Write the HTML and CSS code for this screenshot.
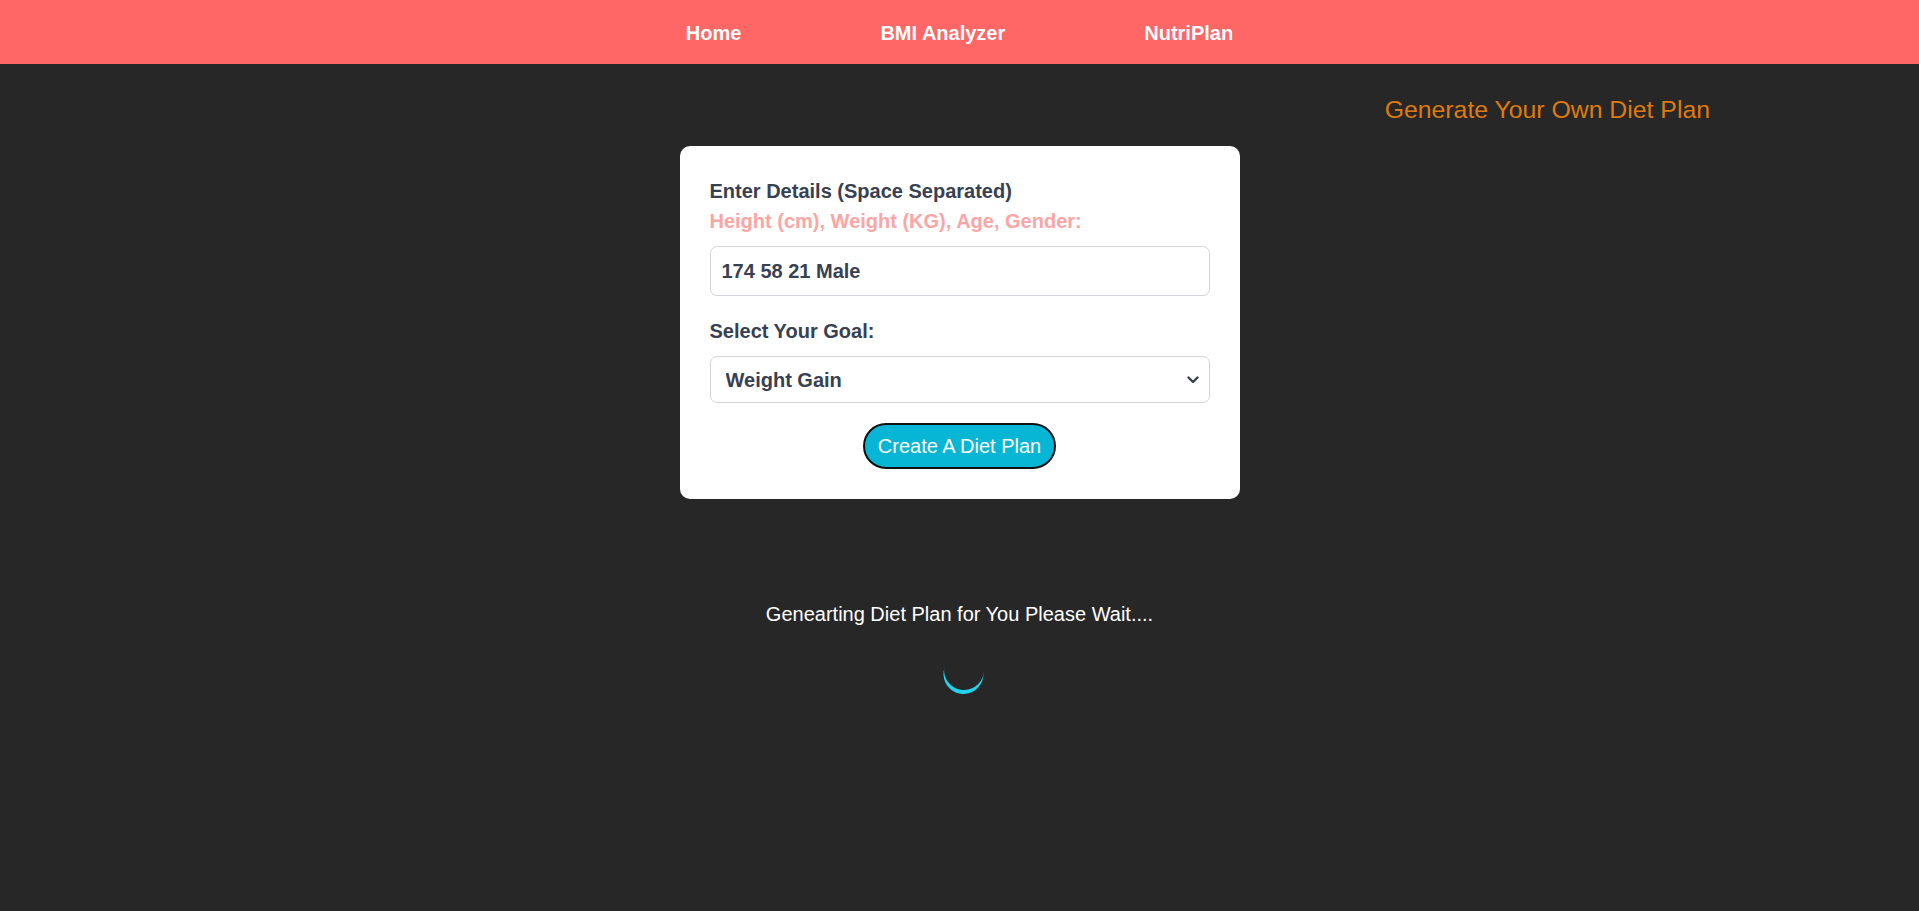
FILE: index.html
```html
<!DOCTYPE html>
<html lang="en">
<head>
<meta charset="utf-8">
<title>NutriPlan</title>
<link rel="stylesheet" href="styles.css">
</head>
<body>
<nav class="navbar">
  <a class="nav-link" href="#">Home</a>
  <a class="nav-link" href="#">BMI Analyzer</a>
  <a class="nav-link" href="#">NutriPlan</a>
</nav>
<div class="title-row">
  <span class="title">Generate Your Own Diet Plan</span>
</div>
<main class="main">
  <form class="card">
    <label class="label">Enter Details (Space Separated)</label>
    <label class="label label-pink">Height (cm), Weight (KG), Age, Gender:</label>
    <input class="field" type="text" value="174 58 21 Male">
    <label class="label label-goal">Select Your Goal:</label>
    <div class="select-wrap">
      <select class="field select">
        <option>Weight Gain</option>
        <option>Weight Loss</option>
      </select>
      <svg class="chevron" width="12" height="8" viewBox="0 0 12 8"><path d="M1.5 1.5 L6 6 L10.5 1.5" fill="none" stroke="#374151" stroke-width="2.4" stroke-linecap="round" stroke-linejoin="round"/></svg>
    </div>
    <div class="btn-row">
      <button class="btn" type="button">Create A Diet Plan</button>
    </div>
  </form>
  <p class="wait">Genearting Diet Plan for You Please Wait....</p>
  <div class="spinner"></div>
</main>
</body>
</html>
```

FILE: styles.css
```css
* { box-sizing: border-box; }
html, body { margin: 0; padding: 0; }
body {
  background: #282728;
  font-family: "Liberation Sans", Arial, sans-serif;
  min-height: 911px;
}
.navbar {
  height: 64px;
  background: #ff6666;
  display: flex;
  justify-content: center;
  align-items: flex-start;
  gap: 139px;
  padding-top: 18px;
}
.nav-link {
  color: #ffffff;
  text-decoration: none;
  font-weight: 700;
  font-size: 20px;
  line-height: 30px;
}
.title-row {
  margin-top: 28px;
  text-align: right;
  padding-right: 209px;
  height: 36px;
  line-height: 36px;
}
.title {
  color: #df7a0c;
  font-size: 24.8px;
}
.main {
  margin-top: 18px;
  display: flex;
  flex-direction: column;
  align-items: center;
}
.card {
  width: 560px;
  background: #ffffff;
  border-radius: 10px;
  padding: 30px;
  display: flex;
  flex-direction: column;
}
.label {
  color: #374151;
  font-weight: 700;
  font-size: 20px;
  line-height: 30px;
}
.label-pink {
  color: #fca5a5;
  margin-bottom: 10px;
}
.label-goal { margin-bottom: 10px; }
.field {
  width: 100%;
  height: 50px;
  border: 1px solid #d1d5db;
  border-radius: 7px;
  padding: 0 11px;
  font-family: "Liberation Sans", Arial, sans-serif;
  font-weight: 700;
  font-size: 20px;
  color: #374151;
  background: #ffffff;
  margin-bottom: 20px;
  outline: none;
}
.select-wrap {
  position: relative;
  margin-bottom: 20px;
}
.select {
  appearance: none;
  -webkit-appearance: none;
  height: 47px;
  padding: 0 15px;
  margin-bottom: 0;
  display: block;
}
.chevron {
  position: absolute;
  right: 11px;
  top: 20px;
}
.btn-row {
  display: flex;
  justify-content: center;
}
.btn {
  background: #06b6d4;
  color: #ffffff;
  border: 2px solid #111111;
  border-radius: 9999px;
  font-family: "Liberation Sans", Arial, sans-serif;
  font-size: 20px;
  line-height: 30px;
  padding: 6px 13px;
  height: 46px;
  cursor: pointer;
}
.wait {
  margin: 100px 0 0 0;
  color: #ffffff;
  font-size: 20px;
  line-height: 30px;
}
.spinner {
  margin-top: 21px;
  margin-left: 8px;
  width: 40px;
  height: 40px;
  border-radius: 50%;
  box-shadow: 0 4px 0 0 #22d3ee;
  transform: rotate(8deg);
}
```
